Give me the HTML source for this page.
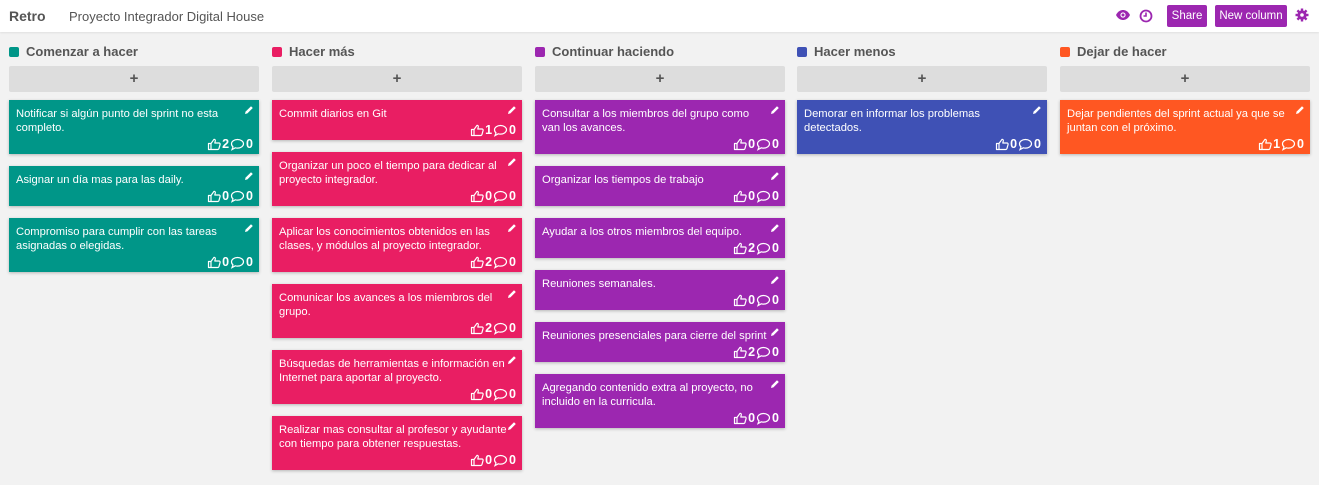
<!DOCTYPE html>
<html><head><meta charset="utf-8">
<style>
*{box-sizing:border-box;margin:0;padding:0}
body{width:1319px;height:485px;background:#f2f2f2;font-family:"Liberation Sans",Arial,sans-serif;overflow:hidden;position:relative}
.top{position:absolute;left:0;top:0;width:1319px;height:32px;background:#fff;box-shadow:0 1px 2px rgba(0,0,0,.08)}
.logo{position:absolute;left:9px;top:8px;font-size:14px;font-weight:bold;color:#555}
.proj{position:absolute;left:69px;top:9px;font-size:13px;color:#555}
.btn{position:absolute;top:5px;height:22px;background:#9c27b0;color:#fff;font-size:11.5px;line-height:22px;text-align:center;border-radius:2px}
.col{position:absolute;top:0;width:250px}
.ct{position:absolute;top:44px;left:0;font-size:13px;font-weight:bold;color:#555;white-space:nowrap}
.ct i{display:inline-block;width:10px;height:10px;border-radius:2px;margin-right:7px;vertical-align:-1px}
.add{position:absolute;top:66px;left:0;width:250px;height:26px;background:#ddd;border-radius:2px;text-align:center;font-size:15px;font-weight:bold;color:#555;line-height:26px}
.card{position:absolute;left:0;width:250px;color:#fff;font-size:11.2px;line-height:14px;padding:7px 0 0 7px;white-space:nowrap;box-shadow:0 1px 3px rgba(0,0,0,.25)}
.card .ed{position:absolute;right:5px;top:5px;width:10px;height:10px}
.card .ft{position:absolute;right:6px;bottom:3px;font-size:12.5px;font-weight:bold;display:flex;align-items:center;gap:1px}
.ft svg{display:block}
</style></head><body>
<div class="top">
<div class="logo">Retro</div>
<div class="proj">Proyecto Integrador Digital House</div>
<svg style="position:absolute;left:1115px;top:9px" width="16" height="12" viewBox="0 0 16 12"><path d="M1 6C3 2 6 1 8 1s5 1 7 5c-2 4-5 5-7 5S3 10 1 6z" fill="#9c27b0"/><circle cx="8" cy="6" r="2.6" fill="#fff"/><circle cx="8" cy="6" r="1.5" fill="#9c27b0"/></svg>
<svg style="position:absolute;left:1139px;top:9px" width="14" height="14" viewBox="0 0 14 14"><circle cx="7" cy="7" r="5.5" fill="none" stroke="#9c27b0" stroke-width="1.8"/><path d="M7 3.5V7H4.5" fill="none" stroke="#9c27b0" stroke-width="1.6"/></svg>
<div class="btn" style="left:1167px;width:40px">Share</div>
<div class="btn" style="left:1215px;width:72px">New column</div>
<svg style="position:absolute;left:1295px;top:8px" width="14" height="14" viewBox="0 0 14 14"><g fill="#9c27b0"><circle cx="7" cy="7" r="4.6"/><rect x="5.8" y="0.5" width="2.4" height="13"/><rect x="0.5" y="5.8" width="13" height="2.4"/><rect x="5.8" y="0.5" width="2.4" height="13" transform="rotate(45 7 7)"/><rect x="5.8" y="0.5" width="2.4" height="13" transform="rotate(-45 7 7)"/></g><circle cx="7" cy="7" r="1.8" fill="#fff"/></svg>
</div>
<div id="board"></div>
<script>
const pen='<svg class="ed" viewBox="0 0 10 10"><path d="M1 9l.6-2.4L7 1.2 8.8 3 3.4 8.4z" fill="#fff"/></svg>';
const th='<svg width="14" height="13" viewBox="0 0 14 13"><path d="M1.5 5.5h2.5v6H1.5zM4 5.5l3-4.2c.9 0 1.5.6 1.3 1.6L7.8 5H12c.8 0 1.3.7 1.1 1.4l-1.2 4.3c-.2.6-.6.8-1.2.8H4" fill="none" stroke="#fff" stroke-width="1.2" stroke-linejoin="round"/></svg>';
const cm='<svg width="15" height="13" viewBox="0 0 15 13"><path d="M7.5 1.5c3.3 0 6 1.9 6 4.3s-2.7 4.3-6 4.3c-.8 0-1.5-.1-2.2-.3L2 11.6l1-2.7C2 8.1 1.5 7 1.5 5.8 1.5 3.4 4.2 1.5 7.5 1.5z" fill="none" stroke="#fff" stroke-width="1.2"/></svg>';
const cols=[
["Comenzar a hacer","#009688",[["Notificar si algún punto del sprint no esta|completo.",2,0],["Asignar un día mas para las daily.",0,0],["Compromiso para cumplir con las tareas|asignadas o elegidas.",0,0]]],
["Hacer más","#e91e63",[["Commit diarios en Git",1,0],["Organizar un poco el tiempo para dedicar al|proyecto integrador.",0,0],["Aplicar los conocimientos obtenidos en las|clases, y módulos al proyecto integrador.",2,0],["Comunicar los avances a los miembros del|grupo.",2,0],["Búsquedas de herramientas e información en|Internet para aportar al proyecto.",0,0],["Realizar mas consultar al profesor y ayudante|con tiempo para obtener respuestas.",0,0]]],
["Continuar haciendo","#9c27b0",[["Consultar a los miembros del grupo como|van los avances.",0,0],["Organizar los tiempos de trabajo",0,0],["Ayudar a los otros miembros del equipo.",2,0],["Reuniones semanales.",0,0],["Reuniones presenciales para cierre del sprint",2,0],["Agregando contenido extra al proyecto, no|incluido en la curricula.",0,0]]],
["Hacer menos","#3f51b5",[["Demorar en informar los problemas|detectados.",0,0]]],
["Dejar de hacer","#ff5722",[["Dejar pendientes del sprint actual ya que se|juntan con el próximo.",1,0]]]
];
const lefts=[9,272,535,797,1060];
let h='';
cols.forEach((c,i)=>{
 h+=`<div class="col" style="left:${lefts[i]}px"><div class="ct"><i style="background:${c[1]}"></i>${c[0]}</div><div class="add">+</div>`;
 let y=100;
 c[2].forEach(k=>{
  const parts=k[0].split('|');
  const ht=parts.length==2?54:40;
  h+=`<div class="card" style="top:${y}px;height:${ht}px;background:${c[1]}">${parts.join('<br>')}${pen}<div class="ft">${th}<span>${k[1]}</span>${cm}<span>${k[2]}</span></div></div>`;
  y+=ht+12;
 });
 h+='</div>';
});
document.getElementById('board').innerHTML=h;
</script>
</body></html>
